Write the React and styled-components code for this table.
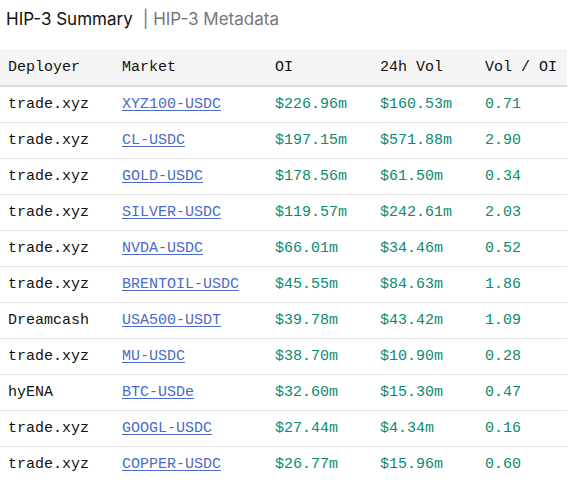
import React from "react";
import styled, { createGlobalStyle } from "styled-components";

const Global = createGlobalStyle`
  html, body { margin: 0; padding: 0; background: #fff; }
  body { font-family: "Liberation Mono", monospace; }
`;

const Page = styled.div`
  width: 567px;
`;

const TitleBar = styled.div`
  display: flex;
  align-items: baseline;
  gap: 10px;
  padding: 9px 6px 0 6px;
  height: 39px;
  box-sizing: border-box;
  font-family: Inter, "Noto Sans", sans-serif;
  font-size: 17px;
`;

const Title = styled.span`
  color: #111;
`;

const SubTitle = styled.span`
  color: #777;
`;

const Table = styled.table`
  width: 100%;
  border-collapse: collapse;
  font-family: "Liberation Mono", monospace;
  font-size: 15px;
  margin-top: 10px;
`;

const Th = styled.th`
  text-align: left;
  font-weight: normal;
  color: #111;
  background: #f5f5f5;
  height: 36px;
  padding: 0 0 0 ${(p) => p.$pl || 0}px;
  width: ${(p) => p.$w}px;
  border-bottom: 2px solid #dcdcdc;
`;

const Td = styled.td`
  height: 35px;
  padding: 0 0 0 ${(p) => p.$pl || 0}px;
  color: ${(p) => (p.$green ? "#0b8a72" : "#111")};
  border-bottom: 1px solid #e4e4e4;
`;

const Row = styled.tr`
  &:last-child td { border-bottom: none; }
`;

const MarketLink = styled.a`
  color: #4a6bc9;
  text-decoration: underline;
  text-underline-offset: 2px;
`;

const rows = [
  ["trade.xyz", "XYZ100-USDC", "$226.96m", "$160.53m", "0.71"],
  ["trade.xyz", "CL-USDC", "$197.15m", "$571.88m", "2.90"],
  ["trade.xyz", "GOLD-USDC", "$178.56m", "$61.50m", "0.34"],
  ["trade.xyz", "SILVER-USDC", "$119.57m", "$242.61m", "2.03"],
  ["trade.xyz", "NVDA-USDC", "$66.01m", "$34.46m", "0.52"],
  ["trade.xyz", "BRENTOIL-USDC", "$45.55m", "$84.63m", "1.86"],
  ["Dreamcash", "USA500-USDT", "$39.78m", "$43.42m", "1.09"],
  ["trade.xyz", "MU-USDC", "$38.70m", "$10.90m", "0.28"],
  ["hyENA", "BTC-USDe", "$32.60m", "$15.30m", "0.47"],
  ["trade.xyz", "GOOGL-USDC", "$27.44m", "$4.34m", "0.16"],
  ["trade.xyz", "COPPER-USDC", "$26.77m", "$15.96m", "0.60"],
];

export default function App() {
  return (
    <Page>
      <Global />
      <TitleBar>
        <Title>HIP-3 Summary</Title>
        <SubTitle>| HIP-3 Metadata</SubTitle>
      </TitleBar>
      <Table>
        <thead>
          <tr>
            <Th $pl={8} $w={114}>Deployer</Th>
            <Th $w={153}>Market</Th>
            <Th $w={105}>OI</Th>
            <Th $w={105}>24h Vol</Th>
            <Th>Vol / OI</Th>
          </tr>
        </thead>
        <tbody>
          {rows.map((r) => (
            <Row key={r[1]}>
              <Td $pl={8}>{r[0]}</Td>
              <Td>
                <MarketLink href="#">{r[1]}</MarketLink>
              </Td>
              <Td $green>{r[2]}</Td>
              <Td $green>{r[3]}</Td>
              <Td $green>{r[4]}</Td>
            </Row>
          ))}
        </tbody>
      </Table>
    </Page>
  );
}
